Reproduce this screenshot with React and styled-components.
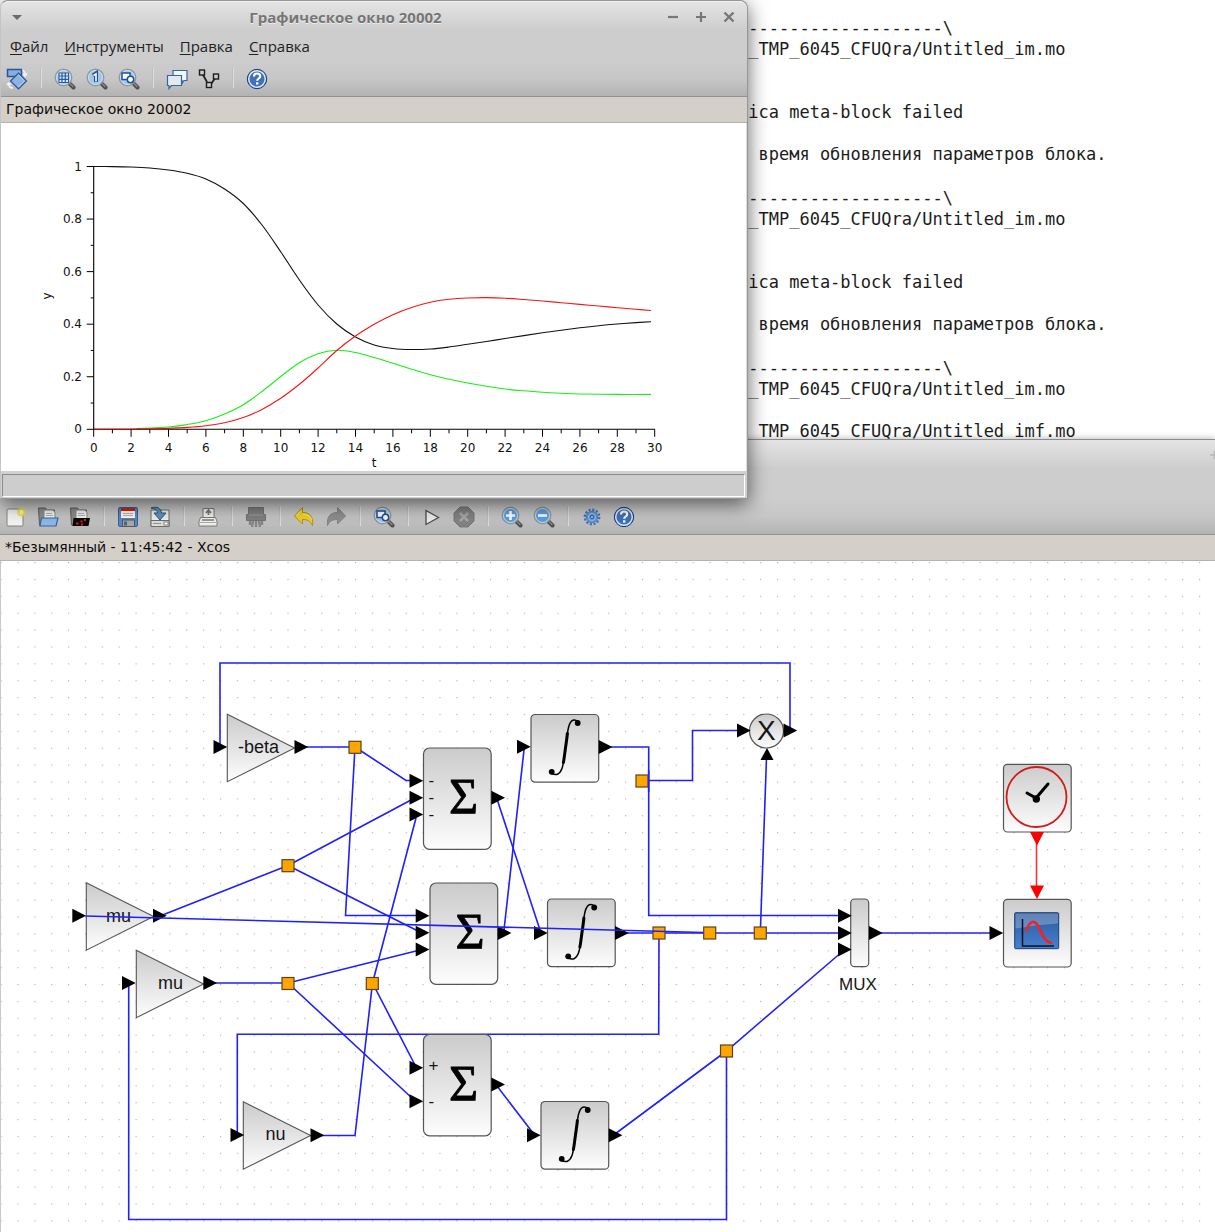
import React from "react";
import styled, { createGlobalStyle } from "styled-components";

const mono = '"DejaVu Sans Mono", "Liberation Mono", monospace';
const wide = '"DejaVu Sans", Verdana, sans-serif';
const human = '"Open Sans", Roboto, sans-serif';
const arial = '"Liberation Sans", Arial, sans-serif';
const times = '"Liberation Serif", "Times New Roman", serif';

const GlobalStyle = createGlobalStyle`
  * { box-sizing: border-box; }
  body { margin: 0; background: #fff; font-family: ${wide}; }
`;

const Desktop = styled.main`
  position: relative;
  display: grid;
  grid-template-rows: 439px 1fr;
  min-height: 100vh;
  overflow: hidden;
`;

const Console = styled.section`
  overflow: hidden;
  min-height: 0;
  padding: 18px 0 0 738px;
  color: #1c1c1c;
  font: 17px/21px ${mono};
  white-space: pre;
`;

const Message = styled.div`
  padding-bottom: 2px;
`;

const Line = styled.div`
  height: 21px;
`;

const XcosWindow = styled.section`
  display: flex;
  flex-direction: column;
  min-width: 0;
  position: relative;
  box-shadow: 0 -1px 6px rgba(0, 0, 0, 0.25);
`;

const FigureWindow = styled.section`
  position: absolute;
  top: 0;
  left: 0;
  width: 748px;
  display: flex;
  flex-direction: column;
  background: #d0d0d0;
  border: 1px solid #969696;
  border-left-color: #c4c4c4;
  border-radius: 8px 8px 0 0;
  box-shadow: 0 5px 20px rgba(0, 0, 0, 0.6);
`;

const Header = styled.header`
  border-bottom: 1px solid #919191;
  border-top: 1px solid ${(p) => (p.$edge ? "#8c8c8c" : "#f2f2f2")};
  border-radius: ${(p) => (p.$edge ? "0" : "8px 8px 0 0")};
  background: linear-gradient(#e4e4e4, #cdcdcd 30%, #cdcdcd 62%, #c6c6c6 82%, #b3b3b3);
`;

const TitleBar = styled.div`
  display: flex;
  align-items: center;
  justify-content: flex-end;
  height: 30px;
  padding-right: ${(p) => (p.$flush ? 0 : 4)}px;
`;

const Title = styled.h1`
  flex: 1;
  margin: 0;
  text-align: center;
  color: #767676;
  font: bold 15px/30px ${human};
  text-shadow: 0 1px 0 #ececec;
`;

const TitleButton = styled.button`
  display: grid;
  place-items: center;
  width: ${(p) => (p.$wide ? 31 : 28)}px;
  height: 28px;
  padding: 0;
  border: 0;
  background: none;
`;

const MenuBar = styled.nav`
  display: flex;
  height: 28px;
  padding-left: 1px;
`;

const MenuItem = styled.button`
  height: 28px;
  padding: 0 8px;
  border: 0;
  background: none;
  color: #222;
  font: 15px/28px ${human};
  u { text-underline-offset: 2px; }
`;

const Toolbar = styled.div`
  display: flex;
  align-items: center;
  height: 36px;
`;

const ToolButton = styled.button`
  display: grid;
  place-items: center;
  width: 32px;
  height: 34px;
  padding: 2px 0 0;
  border: 0;
  background: none;
`;

const Separator = styled.span`
  width: 2px;
  height: 20px;
  margin: 0 7px;
  background: linear-gradient(90deg, #bdbdbd 50%, #dedede 50%);
`;

const TabTitle = styled.h2`
  margin: 0;
  height: 26px;
  padding-left: 5px;
  border-bottom: 1px solid #b5b2ad;
  background: #d4cfc8;
  color: #0c0c0c;
  font: 14px/25px ${wide};
  flex: none;
`;

const ChartPanel = styled.div`
  height: 348px;
  overflow: hidden;
  background: #fff;
  border-right: 1px solid #dcdcdc;
`;

const StatusBar = styled.footer`
  height: 23px;
  margin: 3px 2px 1px 1px;
  border: 1px solid;
  border-color: #8b8b8b #fff #fff #8b8b8b;
  background: #cdcdcd;
`;

const Canvas = styled.div`
  flex: 1;
  overflow: hidden;
  background: #fff;
  border-left: 1px solid #c9c9c9;
`;

const Drawing = styled.svg`
  display: block;
`;

const AxisText = styled.text`
  font: 12px ${wide};
  fill: #111;
  text-anchor: ${(p) => p.$anchor || "middle"};
`;

const BlockText = styled.text`
  font: ${(p) => p.$size || 18}px ${arial};
  fill: #161616;
`;

const SumText = styled.text`
  font: 50px ${times};
  fill: #000;
  stroke: #000;
  stroke-width: 0.8;
  text-anchor: middle;
`;

const Wire = styled.polyline`
  fill: none;
  stroke: ${(p) => p.$color || "#1f1fff"};
  stroke-width: 1.6;
`;

const Curve = styled.path`
  fill: none;
  stroke: ${(p) => p.$color};
  stroke-width: 1.1;
`;

/* ---------- toolbar icons ---------- */

const Icon = ({ children }) => (
  <svg width="22" height="22" viewBox="0 0 22 22" aria-hidden="true">{children}</svg>
);

const Lens = ({ children, big }) => (
  <Icon>
    <path d="M15.5 15.5l4 4" stroke="#4d4f4b" strokeWidth="4" strokeLinecap="round" />
    <path d="M16.5 16l2.5 2.5" stroke="#8b8d88" strokeWidth="1.4" strokeLinecap="round" />
    <circle cx="9.5" cy="9.5" r="8.2" fill={big ? "#5f9fdc" : "#a3c6ea"} stroke="#8f9a9c" strokeWidth="1.5" />
    <circle cx="9.5" cy="9.5" r="7" fill="none" stroke="#cfe2f2" strokeWidth="1" />
    {children}
  </Icon>
);

const icons = {
  rotate: (
    <Icon>
      <path d="M15 2c3 0 4 2 4 5m-2.500-1.500L19 8l2-2.500M7 20c-3 0-4-1-4.500-4M1 17l1.500-2L5 16.500" fill="none" stroke="#eef3f8" strokeWidth="1.600" />
      <rect x="1.500" y="1.500" width="14" height="7" fill="#86aede" stroke="#2c569a" strokeWidth="1.500" />
      <path d="M12.500 5l8 8-8 8-8-8z" fill="#8db3e1" stroke="#2c569a" strokeWidth="1.200" />
      <path d="M12.500 7l6 6-6 6" fill="none" stroke="#b9d2ee" />
    </Icon>
  ),
  lensGrid: (
    <Lens>
      <rect x="5" y="5" width="9.500" height="9.500" fill="#dbe9f7" stroke="#2c5aa0" />
      <path d="M8 5v9.500M11.300 5v9.500M5 8h9.500M5 11.300h9.500" stroke="#2c5aa0" strokeWidth="1.200" />
    </Lens>
  ),
  lensOne: (
    <Lens>
      <path d="M7 7.500L10 5.500V14" fill="none" stroke="#1f4f96" strokeWidth="4" />
      <path d="M7.500 7.500L10 6V13.500" fill="none" stroke="#fff" strokeWidth="1.600" />
    </Lens>
  ),
  lensArea: (
    <Lens>
      <rect x="4" y="5" width="8" height="6.500" fill="#fff" stroke="#1f4f96" strokeWidth="1.500" />
      <circle cx="12.500" cy="11.500" r="3.200" fill="#fff" stroke="#1f4f96" strokeWidth="1.500" />
    </Lens>
  ),
  lensPlus: (
    <Lens big><path d="M9.500 5v9M5 9.500h9" stroke="#fff" strokeWidth="2.600" /></Lens>
  ),
  lensMinus: (
    <Lens big><path d="M5 9.500h9" stroke="#fff" strokeWidth="2.600" /></Lens>
  ),
  bubbles: (
    <Icon>
      <path d="M7 2.500h14v10h-3l-2 3v-3H7z" fill="#f3f6fa" stroke="#3465a4" strokeWidth="1.200" />
      <path d="M1.500 7.500h14v10H5.500l-2.500 3v-3H1.500z" fill="#e4e9f0" stroke="#3465a4" strokeWidth="1.200" />
    </Icon>
  ),
  graph: (
    <Icon>
      <path d="M4 5l5 9M18 9l-5 7" stroke="#222" strokeWidth="1.800" />
      <g fill="#ccc" stroke="#1d1d1d" strokeWidth="1.400">
        <rect x="1.500" y="2" width="5" height="5" />
        <rect x="15.500" y="6" width="5" height="5" />
        <rect x="8.500" y="14.500" width="5" height="5" />
      </g>
    </Icon>
  ),
  help: (
    <Icon>
      <circle cx="11" cy="11" r="9.700" fill="#2f5fa5" stroke="#1d3f77" strokeWidth="1" />
      <circle cx="11" cy="11" r="8.300" fill="#3f72b8" stroke="#dbe6f3" strokeWidth="1.500" />
      <path d="M8 8.500c0-2.200 1.300-3 3-3s3.200.9 3.200 2.700c0 2.300-3 2.300-3 4.600" fill="none" stroke="#fff" strokeWidth="2.200" />
      <rect x="10" y="14.300" width="2.400" height="2.300" fill="#fff" />
    </Icon>
  ),
  blank: (
    <Icon>
      <rect x="2" y="3" width="16" height="17" rx="1" fill="#f3f3f2" stroke="#84857f" />
      <circle cx="16.500" cy="6" r="4.500" fill="#e9e23c" opacity=".8" />
      <circle cx="16.500" cy="6" r="2.200" fill="#fbf8b4" />
    </Icon>
  ),
  open: (
    <Icon>
      <path d="M1.500 2h7l1 2h8v15h-15z" fill="#8d8f8a" stroke="#5b5d59" />
      <path d="M7 4h9l2 2.500V15H7z" fill="#f4f4f4" stroke="#8a8a8a" />
      <path d="M9 7.500h6M9 9.500h7" stroke="#b1b1b1" />
      <path d="M4.500 12H21l-2 8H3z" fill="#8fb8e6" stroke="#3465a4" strokeWidth="1.200" />
    </Icon>
  ),
  openDemo: (
    <Icon>
      <path d="M1.500 2h7l1 2h8v15h-15z" fill="#8d8f8a" stroke="#5b5d59" />
      <path d="M7 4h9l2 2.500V15H7z" fill="#f4f4f4" stroke="#8a8a8a" />
      <path d="M9 7.500h6M9 9.500h7" stroke="#b1b1b1" />
      <path d="M4.500 12H21l-1.500 8H3.500z" fill="#090909" />
      <path d="M7 17.500h2.500M11.500 15.500h2M12 18.500h2M15 14h2" stroke="#e02020" strokeWidth="2" />
    </Icon>
  ),
  save: (
    <Icon>
      <rect x="1.500" y="1.500" width="19" height="19" rx="1.500" fill="#5b88c4" stroke="#3263a5" />
      <rect x="4" y="2" width="14" height="10" fill="#fafafa" />
      <rect x="4" y="2" width="14" height="3" fill="#d4200f" />
      <path d="M6 7.500h10M6 9.500h10" stroke="#b5b5b5" />
      <rect x="5.500" y="14" width="12" height="6.500" fill="#a9aaa8" stroke="#55575a" />
      <rect x="7" y="15.500" width="3" height="4" fill="#50637f" />
    </Icon>
  ),
  saveAs: (
    <Icon>
      <path d="M2 4h18v16.500H2z" fill="#f0f0ef" stroke="#6e706c" />
      <path d="M2 14.500h18v6H2z" fill="#dededc" stroke="#6e706c" />
      <path d="M4 17.500h8" stroke="#93958f" />
      <rect x="15" y="16" width="4" height="3" fill="#fff" stroke="#888" />
      <path d="M2 2c6-2 10 0 10.500 5H17l-6 7-6-7h3.500C8.500 4.500 6 3 2 2z" fill="#5f93b9" stroke="#28597c" />
    </Icon>
  ),
  exportUp: (
    <Icon>
      <path d="M6 11V2.500h11V11" fill="#f1f1f0" stroke="#7c7e79" />
      <path d="M11.500 9V5M9 7l2.500-3L14 7" fill="none" stroke="#777" strokeWidth="1.700" />
      <path d="M3.500 11.500h15l1.500 4v4.500H2v-4.500z" fill="#f0f0ef" stroke="#7c7e79" />
      <path d="M5 14h12" stroke="#9a9c97" strokeWidth="2" />
      <path d="M2 16.500h18" stroke="#adadad" />
    </Icon>
  ),
  shredder: (
    <Icon>
      <path d="M3.500 1.500h15v7h2v6h-19v-6h2z" fill="#808080" stroke="#747474" strokeLinejoin="round" />
      <path d="M4 9h14" stroke="#949494" strokeWidth="1.500" />
      <path d="M5 15v4M8 15l-1 6M11 15v6M14 15l1 6M17 15v4" stroke="#868686" strokeWidth="2.400" />
    </Icon>
  ),
  undo: (
    <Icon>
      <path d="M9.500 1.500v5c7 0 11 4 10 13-2-4.500-5-6-10-6v4.500l-8-8z" fill="#ecd22d" stroke="#b79300" strokeLinejoin="round" />
      <path d="M8.500 4.500L3.500 9.500M10 8.500c5 0 7.500 2 8.500 5" fill="none" stroke="#f9ee96" />
    </Icon>
  ),
  redo: (
    <Icon>
      <path d="M12.500 1.500v5c-7 0-11 4-10 13 2-4.500 5-6 10-6v4.500l8-8z" fill="#909090" stroke="#858585" strokeLinejoin="round" />
    </Icon>
  ),
  play: (
    <Icon><path d="M5 4.500l12.500 7-12.500 7z" fill="#eee" stroke="#4c4c4c" strokeWidth="1.300" /></Icon>
  ),
  stop: (
    <Icon>
      <path d="M7 1h8l6 6v8l-6 6H7l-6-6V7z" fill="#838383" stroke="#777" />
      <path d="M7 7l8 8M15 7l-8 8" stroke="#a7a7a7" strokeWidth="2.600" />
    </Icon>
  ),
  gear: (
    <Icon>
      <circle cx="11" cy="11" r="7.200" fill="none" stroke="#4576b8" strokeWidth="2.400" strokeDasharray="2.200 1.570" />
      <circle cx="11" cy="11" r="5.600" fill="#5f97d8" stroke="#4a7fc2" />
      <circle cx="11" cy="11" r="3.600" fill="none" stroke="#9ac0ea" />
      <circle cx="11" cy="11" r="1.600" fill="#b4bfcc" stroke="#31639f" />
    </Icon>
  ),
};

const Tools = ({ items }) => (
  <Toolbar role="toolbar">
    {items.map((item, i) =>
      item === "|" ? (
        <Separator key={i} />
      ) : (
        <ToolButton key={i} type="button" aria-label={item}>{icons[item]}</ToolButton>
      )
    )}
  </Toolbar>
);

const figureTools = ["rotate", "|", "lensGrid", "lensOne", "lensArea", "|", "bubbles", "graph", "|", "help"];
const xcosTools = [
  "blank", "open", "openDemo", "|", "save", "saveAs", "|", "exportUp", "|", "shredder", "|",
  "undo", "redo", "|", "lensArea", "|", "play", "stop", "|", "lensPlus", "lensMinus", "|", "gear", "help",
];

/* ---------- plot ---------- */

const X0 = 93.7;
const XU = 18.7;
const Y0 = 429.3;
const YU = 262.8;

const curves = [
  ["#111", [0,166.500,1,166.600,2,167,3,168,4,170,5,173.300,6,179,7,189,8,203.500,9,225,10,251.700,11,280,12,305,13,324,14,337,15,345,16,348.500,17,349.500,18,349,19,347,20,344.300,21,341.500,22,338.500,23,335.600,24,332.800,25,330.200,26,327.800,27,325.700,28,324,29,322.600,29.800,321.700]],
  ["#14f014", [2.300,428.500,4,427,5,424.500,6,420.700,7,414,8,404.700,9,391.500,10,376.500,11,362.700,12,353.700,13,350.300,14,352.500,15,357.500,16,363.300,17,369.300,18,374.700,19,379.200,20,383,21,386.300,22,389,23,390.800,24,392.200,25,393.200,26,394,28,394.400,29.800,394.400]],
  ["#f81414", [0,429.300,3,429,4,428.300,5,427.400,6,425.700,7,422.700,8,417.500,9,409.400,10,398.300,11,384.300,12,368,13,350.500,14,336,15,324.300,16,314.700,17,307.500,18,302.300,19,299.300,20,298,21,297.600,22,298.200,23,299.500,24,301,25,302.700,26,304.400,27,306,28,307.700,29,309.300,29.800,310.500]],
];

const smooth = (flat) => {
  const p = [];
  for (let i = 0; i < flat.length; i += 2) p.push([X0 + flat[i] * XU, flat[i + 1]]);
  let d = `M${p[0][0]} ${p[0][1]}`;
  for (let i = 0; i < p.length - 1; i++) {
    const a = p[i - 1] || p[i];
    const b = p[i];
    const c = p[i + 1];
    const e = p[i + 2] || c;
    d += `C${b[0] + (c[0] - a[0]) / 6} ${b[1] + (c[1] - a[1]) / 6} ${c[0] - (e[0] - b[0]) / 6} ${c[1] - (e[1] - b[1]) / 6} ${c[0]} ${c[1]}`;
  }
  return d;
};

const range = (n) => Array.from({ length: n }, (_, i) => i);

const Plot = () => (
  <Drawing width="744" height="348" viewBox="1 123 744 348">
    {curves.map(([color, data]) => (
      <Curve key={color} $color={color} d={smooth(data)} />
    ))}
    <path d={`M${X0} 166V${Y0}H655`} fill="none" stroke="#000" strokeWidth="1.100" />
    <path d={`M${X0} ${Y0}H${X0 + 75}`} stroke="#f81414" strokeWidth="1" opacity=".7" />
    {range(31).map((t) => (
      <line key={t} x1={X0 + t * XU} x2={X0 + t * XU} y1={Y0} y2={Y0 + (t % 2 ? 4 : 7.5)} stroke="#000" />
    ))}
    {range(16).map((t) => (
      <AxisText key={t} x={X0 + t * 2 * XU} y="452">{t * 2}</AxisText>
    ))}
    {range(11).map((t) => (
      <line key={t} x1={X0 - (t % 2 ? 3 : 7)} x2={X0} y1={Y0 - (t * YU) / 10} y2={Y0 - (t * YU) / 10} stroke="#000" />
    ))}
    {["0", "0.2", "0.4", "0.6", "0.8", "1"].map((s, i) => (
      <AxisText key={s} $anchor="end" x="82" y={Y0 + 4 - (i * YU) / 5}>{s}</AxisText>
    ))}
    <AxisText transform="translate(51 296) rotate(-90)">y</AxisText>
    <AxisText x="374" y="467">t</AxisText>
  </Drawing>
);

/* ---------- block diagram ---------- */

const wires = [
  "220,744 220,663 790,663 790,728",
  "305,747 355,747", "355,747 406,780.5 414,780.5", "355,747 345.5,915.5 418,915.5",
  "160,916 288,865.5", "288,865.5 412,799.5", "288,865.5 418,931",
  "212,983 288,983", "288,983 418,950.5", "288,983 413,1099",
  "416,818 372.500,983 355,1135.500 322,1135.500", "372.500,983 415,1065",
  "497,799 540,930", "504,930 524,750",
  "610,747 648.700,747 648.700,915.500 841,915.500",
  "642,780.500 692.500,780.500 692.500,730.500 740,730.500",
  "625,933 841,933", "659,933 658.700,1034.300 237.300,1034.300 237.300,1132",
  "760.300,933 766.500,758", "880,933 992,933",
  "497,1086 533,1133", "615,1134 726.500,1051 843,951",
  "726.500,1051 726.500,1219.500 128.700,1219.500 128.700,985",
];

const ports = [
  [213.5, 747], [72.3, 915.7], [122, 983], [230.5, 1135],
  [409.5, 780.7], [409.5, 797.7], [409.5, 814.5],
  [415.7, 915.7], [415.7, 932.7], [415.7, 949.5],
  [409.5, 1067.7], [409.5, 1101.3],
  [517, 746.7], [534, 933], [527, 1135.3], [737, 730.5],
  [838, 915.7], [838, 933], [838, 949.5], [989.5, 933],
  [294.5, 747], [153, 915.7], [203.3, 983], [310.5, 1135.3],
  [491.3, 797.7], [497.7, 933], [491.3, 1084.5],
  [598.7, 747], [615, 933], [608.7, 1135.3], [783.5, 730.5], [869, 933],
];

const splits = [
  [355, 747.3], [288, 865.7], [288, 983.5], [372.3, 983.5], [642, 781],
  [659, 933], [709.7, 933], [760.3, 933], [726.5, 1051],
];

const gains = [
  [227.3, 748, "-beta", 238, 752.7],
  [86.3, 916.5, "mu", 106, 921.5],
  [136.3, 984, "mu", 158, 988.5],
  [243.3, 1135.5, "nu", 265.5, 1139.7],
];

const sums = [
  [423.5, 748, [["-", 786], ["-", 803], ["-", 820]]],
  [430, 883, []],
  [423.5, 1034.5, [["+", 1071], ["-", 1107]]],
];

const integrals = [[531, 714.5], [547.5, 899], [541, 1101.5]];

const Box = ({ x, y, w = 67.7, h = 67.7, r = 4 }) => (
  <rect x={x} y={y} width={w} height={h} rx={r} fill="url(#shade)" stroke="#555" strokeWidth="1.200" />
);

const Integrator = ({ x, y }) => (
  <g transform={`translate(${x} ${y})`}>
    <Box x={0} y={0} />
    <g fill="none" stroke="#000" strokeLinecap="round">
      <path d="M47 7C44 4.500 39.500 4 37.500 13C36.300 18 36 22 34.400 34C33 45 32.500 50 31 54C28.500 60.500 25 61 20.500 59" strokeWidth="1.500" />
      <path d="M36.400 19C36 23 35.300 28 34.400 34C33.600 40 33.200 44 32.400 48" strokeWidth="3" />
    </g>
    <circle cx="46.700" cy="8.500" r="2.900" />
    <circle cx="20.700" cy="57.300" r="2.900" />
  </g>
);

const Diagram = () => (
  <Drawing width="1214" height="671" viewBox="1 561 1214 671">
    <defs>
      <pattern id="dots" x="0.500" y="562" width="16.880" height="16.880" patternUnits="userSpaceOnUse">
        <rect width="1.200" height="1.200" fill="#b4b4b4" />
      </pattern>
      <linearGradient id="shade" x1="0" y1="0" x2="0" y2="1">
        <stop offset="0" stopColor="#cbcbcb" />
        <stop offset="1" stopColor="#fdfdfd" />
      </linearGradient>
      <linearGradient id="screen" x1="0" y1="0" x2="0" y2="1">
        <stop offset="0" stopColor="#2c5a9e" />
        <stop offset="1" stopColor="#4680cf" />
      </linearGradient>
    </defs>
    <rect x="0" y="561" width="1215" height="671" fill="url(#dots)" />
    {wires.map((w) => <Wire key={w} points={w} />)}
    <Wire $color="#ff3030" points="1036.500,840 1036.500,890" />

    {gains.map(([x, y, label, tx, ty]) => (
      <g key={y}>
        <path d={`M${x} ${y - 33.7}L${x + 67.3} ${y}L${x} ${y + 33.7}z`} fill="url(#shade)" stroke="#555" strokeWidth="1.100" />
        <BlockText x={tx} y={ty}>{label}</BlockText>
      </g>
    ))}
    {sums.map(([x, y, signs]) => (
      <g key={y}>
        <Box x={x} y={y} h={101.3} r={6} />
        <SumText x={x + 40} y={y + 65}>Σ</SumText>
        {signs.map(([s, sy]) => <BlockText key={sy} $size={17} x={x + 5} y={sy}>{s}</BlockText>)}
      </g>
    ))}
    {integrals.map(([x, y]) => <Integrator key={y} x={x} y={y} />)}
    <circle cx="766.500" cy="731" r="17" fill="url(#shade)" stroke="#555" strokeWidth="1.200" />
    <BlockText $size={28} x="757" y="740">X</BlockText>

    <Box x={850.7} y={899} w={18} r={4} />
    <BlockText $size={17} x="839" y="990">MUX</BlockText>

    <Box x={1003.5} y={764.3} />
    <circle cx="1036.500" cy="797" r="30" fill="none" stroke="#cf1c1c" strokeWidth="1.800" />
    <path d="M1027 793L1036 798L1048 784" fill="none" stroke="#000" strokeWidth="3" strokeLinecap="round" />
    <circle cx="1036.300" cy="799" r="3.700" />

    <Box x={1003.5} y={899.3} />
    <rect x="1014.700" y="912.700" width="44" height="36" rx="1" fill="url(#screen)" stroke="#1d3f77" />
    <path d="M1015.500 913.500h42.500v10q-21 1-42.500 5z" fill="#fff" opacity=".25" />
    <path d="M1022.500 919v27h31.500" fill="none" stroke="#0b1220" strokeWidth="1.500" />
    <path d="M1026 931c4-11 9-12 13-3s8 16 13 14.500" fill="none" stroke="#f02428" strokeWidth="2.800" />

    {ports.map(([x, y]) => (
      <path key={`${x} ${y}`} d={`M${x} ${y - 7}L${x + 13.7} ${y}L${x} ${y + 7}z`} />
    ))}
    <path d="M767 748L773.500 760H760.500z" />
    <path d="M1030 832h14l-7 13.500zM1030 885.500h14l-7 13.500z" fill="#f00" />
    {splits.map(([x, y]) => (
      <rect key={`${x} ${y}`} x={x - 6} y={y - 6} width="12" height="12" fill="#ffa500" stroke="#5c4416" strokeWidth="1.200" />
    ))}
    <Wire points="85.500,916 703.500,932.500" />
    <Wire points="648.700,770 648.700,792" />
  </Drawing>
);

/* ---------- console ---------- */

const dashes = " -------------------\\";
const model = " _TMP_6045_CFUQra/Untitled_im.mo";
const failed = "lica meta-block failed";
const update = "о время обновления параметров блока.";

const messages = [
  [dashes, model, "", "", failed, "", update, ""],
  [dashes, model, "", "", failed, "", update, ""],
  [dashes, model, "", " _TMP_6045_CFUQra/Untitled_imf.mo"],
];

const menu = ["Файл", "Инструменты", "Правка", "Справка"];

export default function App() {
  return (
    <Desktop>
      <GlobalStyle />
      <Console aria-label="Scilab">
        {messages.map((lines, i) => (
          <Message key={i}>
            {lines.map((line, j) => <Line key={j}>{line}</Line>)}
          </Message>
        ))}
      </Console>

      <XcosWindow>
        <Header $edge>
          <TitleBar $flush>
            <svg width="5" height="8"><path d="M0 4h5M4.500 0v8" stroke="#b5b5b5" strokeWidth="1.500" /></svg>
          </TitleBar>
          <MenuBar />
          <Tools items={xcosTools} />
        </Header>
        <TabTitle>*Безымянный - 11:45:42 - Xcos</TabTitle>
        <Canvas><Diagram /></Canvas>
      </XcosWindow>

      <FigureWindow>
        <Header>
          <TitleBar>
            <TitleButton $wide type="button" aria-label="Меню окна">
              <svg width="12" height="7"><path d="M1 1h10L6 6z" fill="#6b6b6b" /></svg>
            </TitleButton>
            <Title>Графическое окно 20002</Title>
            <TitleButton type="button" aria-label="Свернуть">
              <svg width="12" height="12"><path d="M1 6h10" stroke="#777" strokeWidth="2.200" /></svg>
            </TitleButton>
            <TitleButton type="button" aria-label="Развернуть">
              <svg width="12" height="12"><path d="M1 6h10M6 1v10" stroke="#777" strokeWidth="2.200" /></svg>
            </TitleButton>
            <TitleButton type="button" aria-label="Закрыть">
              <svg width="12" height="12"><path d="M1.500 1.500l9 9M10.500 1.500l-9 9" stroke="#777" strokeWidth="2.400" /></svg>
            </TitleButton>
          </TitleBar>
          <MenuBar>
            {menu.map((m) => (
              <MenuItem key={m} type="button"><u>{m[0]}</u>{m.slice(1)}</MenuItem>
            ))}
          </MenuBar>
          <Tools items={figureTools} />
        </Header>
        <TabTitle>Графическое окно 20002</TabTitle>
        <ChartPanel><Plot /></ChartPanel>
        <StatusBar />
      </FigureWindow>
    </Desktop>
  );
}
